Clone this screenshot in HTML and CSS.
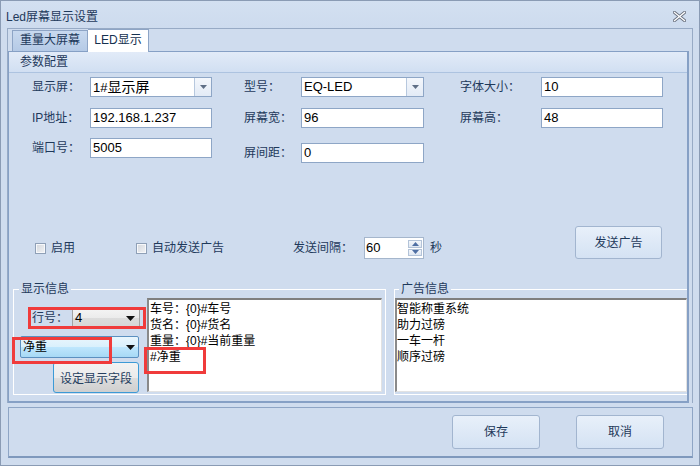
FILE: index.html
```html
<!DOCTYPE html>
<html lang="zh-CN">
<head>
<meta charset="utf-8">
<title>Led屏幕显示设置</title>
<link rel="stylesheet" href="styles.css">
</head>
<body>
<div class="window">
  <div class="titlebar">
    <span class="title">Led屏幕显示设置</span>
    <span class="close">
      <svg width="13" height="11" viewBox="0 0 13 11">
        <path d="M1.5 1.5L11.5 9.5M11.5 1.5L1.5 9.5" stroke="#6b7280" stroke-width="3.2" stroke-linecap="square"/>
        <path d="M1.5 1.5L11.5 9.5M11.5 1.5L1.5 9.5" stroke="#ffffff" stroke-width="1.3" stroke-linecap="square"/>
      </svg>
    </span>
  </div>

  <div class="tabctl">
    <div class="tabs">
      <div class="tab">重量大屏幕</div>
      <div class="tab active">LED显示</div>
    </div>
    <div class="page">
      <div class="page-head">参数配置</div>

      <div class="form">
        <span class="lbl">显示屏：</span>
        <div class="combo"><span class="val">1#<span class="big">显示屏</span></span><span class="drop"><svg width="7" height="4" viewBox="0 0 7 4"><path d="M0 0H7L3.5 4Z" fill="#5f6f86"/></svg></span></div>
        <span></span>
        <span class="lbl">型号：</span>
        <div class="combo"><span class="val">EQ-LED</span><span class="drop"><svg width="7" height="4" viewBox="0 0 7 4"><path d="M0 0H7L3.5 4Z" fill="#5f6f86"/></svg></span></div>
        <span></span>
        <span class="lbl">字体大小：</span>
        <div class="input">10</div>

        <span class="lbl">IP地址：</span>
        <div class="input">192.168.1.237</div>
        <span></span>
        <span class="lbl">屏幕宽：</span>
        <div class="input">96</div>
        <span></span>
        <span class="lbl">屏幕高：</span>
        <div class="input">48</div>

        <span class="lbl">端口号：</span>
        <div class="input">5005</div>
        <span></span>
        <span class="lbl shift">屏间距：</span>
        <div class="input shift">0</div>
      </div>

      <div class="options">
        <span class="check"><span class="cb"></span>启用</span>
        <span class="check auto"><span class="cb"></span>自动发送广告</span>
        <span class="interval">发送间隔：</span>
        <div class="spin">
          <span class="val">60</span>
          <span class="spin-btns">
            <span class="sb"><svg width="7" height="4" viewBox="0 0 7 4"><path d="M0 4H7L3.5 0Z" fill="#4f6fa3"/></svg></span>
            <span class="sb"><svg width="7" height="4" viewBox="0 0 7 4"><path d="M0 0H7L3.5 4Z" fill="#4f6fa3"/></svg></span>
          </span>
        </div>
        <span class="sec">秒</span>
        <button class="btn send">发送广告</button>
      </div>

      <div class="groups">
        <fieldset class="grp grp-show">
          <legend>显示信息</legend>
          <div class="show-body">
            <div class="show-left">
              <div class="row-line">
                <span class="lbl line-lbl">行号：</span>
                <div class="gcombo"><span>4</span><svg width="9" height="5" viewBox="0 0 9 5"><path d="M0 0H9L4.5 5Z" fill="#111"/></svg></div>
              </div>
              <div class="bcombo"><span>净重</span><svg width="9" height="5" viewBox="0 0 9 5"><path d="M0 0H9L4.5 5Z" fill="#111"/></svg></div>
              <button class="setbtn">设定显示字段</button>
            </div>
            <div class="text text-show">
              <div>车号：{0}#车号</div>
              <div>货名：{0}#货名</div>
              <div>重量：{0}#当前重量</div>
              <div>#净重</div>
            </div>
          </div>
        </fieldset>
        <fieldset class="grp grp-ad">
          <legend>广告信息</legend>
          <div class="text text-ad">
            <div>智能称重系统</div>
            <div>助力过磅</div>
            <div>一车一杆</div>
            <div>顺序过磅</div>
          </div>
        </fieldset>
      </div>
    </div>
  </div>

  <div class="footer">
    <button class="btn foot">保存</button>
    <button class="btn foot">取消</button>
  </div>

  <div class="mark m1"></div>
  <div class="mark m2"></div>
  <div class="mark m3"></div>
</div>
</body>
</html>
```

FILE: styles.css
```css
* { box-sizing: border-box; }
html, body { margin: 0; padding: 0; }
body {
  width: 700px;
  height: 466px;
  overflow: hidden;
  font-family: "Liberation Sans", "Noto Sans CJK SC", sans-serif;
  font-size: 12px;
  color: #1e395b;
}
.window {
  position: relative;
  width: 700px;
  height: 466px;
  background: #cfdcee;
  border: 1px solid #8a9bb4;
  display: flex;
  flex-direction: column;
}

/* title bar */
.titlebar {
  height: 27px;
  display: flex;
  align-items: flex-start;
  padding-left: 5px;
  background: linear-gradient(#d3e0f1, #cddbee);
}
.title {
  margin-top: 7px;
  line-height: 18px;
  font-size: 12px;
  color: #1e395b;
}
.close {
  margin-left: auto;
  margin-right: 13px;
  margin-top: 10px;
  width: 13px;
  height: 11px;
  display: flex;
}

/* tab control */
.tabctl {
  margin: 0 6px;
  height: 375px;
  border: 1px solid #97aac5;
  border-bottom: none;
  display: flex;
  flex-direction: column;
}
.tabs {
  height: 22px;
  display: flex;
  align-items: flex-end;
  padding-left: 4px;
}
.tab {
  width: 76px;
  height: 21px;
  border: 1px solid #8ea5c6;
  border-bottom: none;
  background: linear-gradient(#c8d9ef, #b5cae6);
  text-align: center;
  line-height: 19px;
  font-size: 12px;
  color: #1e395b;
}
.tab.active {
  width: 61px;
  height: 23px;
  margin-bottom: -1px;
  border-left: none;
  background: #ffffff;
  color: #15314f;
  position: relative;
  z-index: 1;
  line-height: 21px;
}
.page {
  width: 681px;
  height: 352px;
  border: 1px solid #86a0c5;
  border-right-width: 2px;
  border-bottom-width: 2px;
  display: flex;
  flex-direction: column;
}
.page-head {
  height: 21px;
  padding-left: 11px;
  line-height: 20px;
  background: linear-gradient(#e2ebf8, #d1dff2);
  border-bottom: 1px solid #adc3e0;
  color: #1e395b;
}

/* form grid */
.form {
  margin-top: 4px;
  padding-left: 23px;
  display: grid;
  grid-template-columns: 58px 122px 32px 57px 123px 36px 81px 122px;
  grid-template-rows: 20px 20px 20px;
  row-gap: 10.5px;
  align-items: center;
}
.lbl {
  line-height: 16px;
  color: #1e395b;
  white-space: nowrap;
}
.shift { margin-top: 10px; }
.input, .combo {
  height: 20px;
  background: #fff;
  border: 1px solid #8ea6c6;
  font-size: 13px;
  line-height: 18px;
  color: #000;
  padding-left: 2px;
  white-space: nowrap;
  overflow: hidden;
}
.combo {
  display: flex;
  padding-right: 0;
}
.combo .val { flex: 1; }
.big { font-size: 14px; }
.drop {
  width: 17px;
  height: 18px;
  border-left: 1px solid #b7c8de;
  background: linear-gradient(#f4f7fc, #e3ebf6);
  display: flex;
  align-items: center;
  justify-content: center;
}

/* options row */
.options {
  margin-top: 68px;
  height: 33px;
  display: flex;
  align-items: flex-end;
  padding-left: 26px;
  padding-right: 25px;
}
.check {
  height: 22px;
  display: flex;
  align-items: center;
  line-height: 16px;
  white-space: nowrap;
}
.cb {
  width: 11px;
  height: 11px;
  border: 1px solid #8fa0b7;
  background: linear-gradient(135deg, #d3d7dd, #f2f3f5);
  box-shadow: inset 0 0 0 1px #f7f8fa;
  margin-right: 5px;
}
.check.auto { margin-left: 61px; }
.interval {
  margin-left: 69px;
  height: 22px;
  line-height: 22px;
  white-space: nowrap;
}
.spin {
  margin-left: 11px;
  width: 60px;
  height: 22px;
  background: #fff;
  border: 1px solid #a5b6cc;
  display: flex;
  align-items: stretch;
  color: #000;
  font-size: 13px;
}
.spin .val {
  flex: 1;
  line-height: 20px;
  padding-left: 1px;
}
.spin-btns {
  width: 15px;
  display: flex;
  flex-direction: column;
  padding: 2px 1px 2px 0;
  gap: 1px;
}
.sb {
  flex: 1;
  border: 1px solid #b3c3d8;
  background: linear-gradient(#f3f6fb, #dfe7f2);
  display: flex;
  align-items: center;
  justify-content: center;
}
.sec {
  margin-left: 6px;
  height: 22px;
  line-height: 22px;
}
.btn {
  font-family: "Liberation Sans", "Noto Sans CJK SC", sans-serif;
  font-size: 12px;
  color: #1e395b;
  border: 1px solid #a2b5cf;
  border-radius: 3px;
  background: linear-gradient(#e8f0fa, #d4e2f3);
  padding: 0;
  line-height: 16px;
}
.btn.send {
  margin-left: auto;
  width: 87px;
  height: 33px;
}

/* group boxes */
.groups {
  margin-top: 22px;
  display: flex;
  align-items: flex-start;
}
.grp {
  margin: 0;
  padding: 0;
  height: 114px;
  border: 1px solid #ffffff;
  min-width: 0;
}
.grp legend {
  margin-left: 5px;
  padding: 0 2px;
  line-height: 16px;
  font-size: 12px;
  color: #1e395b;
}
.grp-show {
  margin-left: 4px;
  width: 373px;
}
.grp-ad {
  margin-left: 8px;
  flex: 1;
  border-right: none;
}
.grp-ad legend { margin-left: 4px; }
.show-body {
  display: flex;
}
.show-left {
  width: 133px;
  display: flex;
  flex-direction: column;
}
.row-line {
  margin-top: 11px;
  display: flex;
  align-items: center;
  padding-left: 18px;
}
.line-lbl { width: 40px; }
.gcombo {
  width: 68px;
  height: 20px;
  border: 1px solid #a3a3a3;
  border-radius: 2px;
  background: linear-gradient(#f4f4f4 0%, #ebebeb 50%, #dcdcdc 51%, #d6d6d6 100%);
  display: flex;
  align-items: center;
  justify-content: space-between;
  padding: 0 4px 0 2px;
  color: #000;
  font-size: 13px;
  line-height: 18px;
}
.bcombo {
  margin-top: 8px;
  margin-left: 6px;
  width: 119px;
  height: 22px;
  border: 1px solid #5b90c0;
  border-radius: 2px;
  background: linear-gradient(#eaf6fd 0%, #d9f0fc 50%, #bee6fd 51%, #a7d9f5 100%);
  display: flex;
  align-items: center;
  justify-content: space-between;
  padding: 0 3px 0 2px;
  color: #000;
  font-size: 12px;
  line-height: 18px;
}
.setbtn {
  margin-top: 4px;
  margin-left: 39px;
  width: 86px;
  height: 31px;
  border: 1px solid #3c9ad6;
  border-radius: 3px;
  background: linear-gradient(#f2f2f2 0%, #ebebeb 50%, #dddddd 51%, #cfcfcf 100%);
  font-family: "Liberation Sans", "Noto Sans CJK SC", sans-serif;
  font-size: 12px;
  color: #26405f;
  padding: 0;
}
.text {
  margin-top: 1px;
  height: 94px;
  background: #fff;
  border-style: solid;
  border-width: 2px 1px 1px 2px;
  border-color: #7f7f7f #e2e2e2 #e2e2e2 #8a8a8a;
  color: #000;
  font-size: 12px;
  line-height: 16px;
  padding: 1px 0 0 1px;
  white-space: nowrap;
  overflow: hidden;
}
.text-show { width: 235px; }
.text-ad { width: 100%; padding-left: 0; }

/* footer */
.footer {
  margin: 4px 6px 0 7px;
  height: 51px;
  border: 1px solid #8ea5c5;
  border-bottom: 2px solid #7f99bd;
  display: flex;
  justify-content: flex-end;
  align-items: flex-start;
  padding-top: 7px;
  padding-right: 28px;
  gap: 36px;
}
.btn.foot {
  width: 88px;
  height: 34px;
}

/* red annotation marks */
.mark {
  position: absolute;
  border: 3px solid #f03b3b;
}
.m1 { left: 27px; top: 306px; width: 118px; height: 22px; }
.m2 { left: 11px; top: 336px; width: 100px; height: 27px; }
.m3 { left: 143px; top: 346px; width: 62px; height: 27px; }
```
